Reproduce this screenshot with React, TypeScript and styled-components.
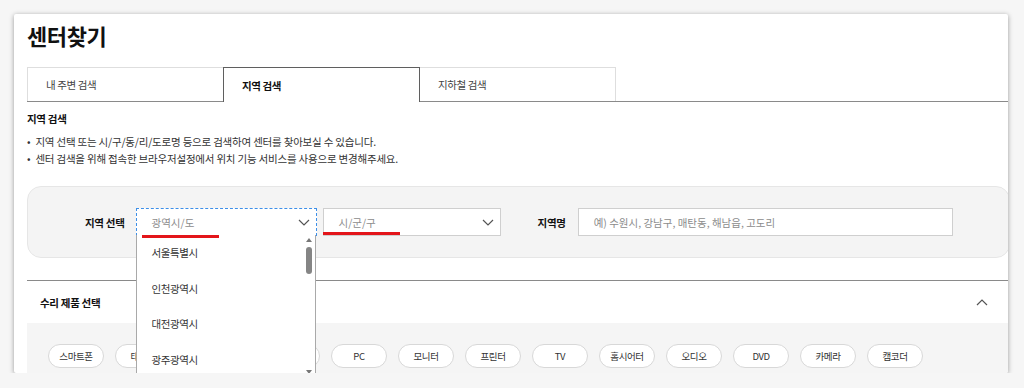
import React from "react";
import styled, { createGlobalStyle } from "styled-components";

const GlobalStyle = createGlobalStyle`
  body {
    margin: 0;
    background: #f6f6f6;
    font-family: "Noto Sans CJK KR", "Noto Sans", sans-serif;
    color: #222;
  }
`;

const Screen = styled.div`
  padding: 14px 0 0 14px;
`;

const Frame = styled.div`
  width: 994px;
  height: 359px;
  background: #fff;
  box-shadow: 0 1px 5px rgba(0, 0, 0, 0.38);
  border-radius: 2px;
  overflow: hidden;
  box-sizing: border-box;
  padding-left: 13px;
`;

const Title = styled.h1`
  margin: 4px 0 15px;
  font-size: 22px;
  line-height: 34px;
  font-weight: 700;
  letter-spacing: -0.4px;
  color: #111;
`;

const TabBar = styled.div`
  display: flex;
  align-items: flex-start;
  height: 35px;
  box-sizing: border-box;
  border-bottom: 1px solid #8a8a8a;
`;

const Tab = styled.div<{ $active?: boolean }>`
  position: relative;
  z-index: ${(p) => (p.$active ? 1 : 0)};
  width: 197px;
  height: ${(p) => (p.$active ? "35px" : "34px")};
  margin-left: -1px;
  box-sizing: border-box;
  display: flex;
  align-items: center;
  padding-left: 18px;
  background: #fff;
  border: 1px solid ${(p) => (p.$active ? "#5f5f5f" : "#dedede")};
  border-bottom: none;
  font-size: 10.5px;
  letter-spacing: -0.4px;
  font-weight: ${(p) => (p.$active ? 700 : 400)};
  color: ${(p) => (p.$active ? "#111" : "#444")};

  &:first-child {
    margin-left: 0;
  }
`;

const SubTitle = styled.div`
  margin-top: 9px;
  font-size: 10.5px;
  line-height: 16px;
  font-weight: 700;
  letter-spacing: -0.3px;
  color: #111;
`;

const Notes = styled.ul`
  margin: 6px 0 0;
  padding: 0;
  list-style: none;
`;

const Note = styled.li`
  font-size: 10.5px;
  line-height: 17px;
  letter-spacing: -0.2px;
  color: #333;

  &::before {
    content: "•";
    margin-right: 5px;
  }
`;

const SearchPanel = styled.div`
  margin-top: 19px;
  width: calc(100% + 2px);
  height: 72px;
  box-sizing: border-box;
  display: flex;
  align-items: center;
  padding-left: 57px;
  background: #f4f4f4;
  border: 1px solid #e6e6e6;
  border-radius: 14px;
`;

const FieldLabel = styled.span<{ $gap: number; $lead?: number }>`
  margin-left: ${(p) => p.$lead ?? 0}px;
  margin-right: ${(p) => p.$gap}px;
  font-size: 10.5px;
  font-weight: 700;
  letter-spacing: -0.3px;
  color: #111;
`;

const SelectBox = styled.div<{ $width: number; $focused?: boolean; $gap?: number }>`
  position: relative;
  width: ${(p) => p.$width}px;
  height: 28px;
  margin-right: ${(p) => p.$gap ?? 0}px;
  box-sizing: border-box;
  display: flex;
  align-items: center;
  justify-content: space-between;
  padding: 0 6px 0 15px;
  background: #fff;
  border: 1px ${(p) => (p.$focused ? "dashed #3d8fe8" : "solid #cfcfcf")};
  font-size: 10.5px;
  letter-spacing: 0;
  color: #8c8c8c;
`;

const TextField = styled.div`
  width: 375px;
  height: 28px;
  box-sizing: border-box;
  display: flex;
  align-items: center;
  padding-left: 15px;
  background: #fff;
  border: 1px solid #cfcfcf;
  font-size: 10.5px;
  letter-spacing: 0;
  color: #8c8c8c;
`;

const RedMark = styled.span<{ $left: number; $width: number; $bottom: number }>`
  position: absolute;
  left: ${(p) => p.$left}px;
  bottom: ${(p) => p.$bottom}px;
  width: ${(p) => p.$width}px;
  height: 3px;
  background: #e3151a;
  z-index: 3;
`;

const Dropdown = styled.div`
  position: absolute;
  top: 100%;
  left: -1px;
  width: 180px;
  height: 140px;
  box-sizing: border-box;
  display: flex;
  background: #fff;
  border: 1px solid #a9a9a9;
  border-top: none;
  z-index: 2;
`;

const Options = styled.div`
  flex: 1;
`;

const Option = styled.div`
  height: 35.5px;
  display: flex;
  align-items: center;
  padding-left: 15px;
  font-size: 10.5px;
  letter-spacing: -0.4px;
  color: #333;
`;

const ScrollTrack = styled.div`
  width: 12px;
  display: flex;
  flex-direction: column;
  align-items: center;
  padding-top: 3px;
`;

const Arrow = styled.span<{ $down?: boolean }>`
  width: 0;
  height: 0;
  border-left: 3px solid transparent;
  border-right: 3px solid transparent;
  ${(p) => (p.$down ? "border-top: 4px solid #777;" : "border-bottom: 4px solid #777;")}
`;

const Thumb = styled.span`
  width: 6px;
  height: 27px;
  margin-top: 5px;
  border-radius: 3px;
  background: #858585;
`;

const TrackFill = styled.span`
  flex: 1;
`;

const SectionHeader = styled.div`
  margin-top: 22px;
  height: 43px;
  box-sizing: border-box;
  display: flex;
  align-items: center;
  justify-content: space-between;
  padding: 0 20px 0 13px;
  border-top: 1px solid #8a8a8a;
  font-size: 10.5px;
  font-weight: 700;
  letter-spacing: -0.3px;
  color: #111;
`;

const ProductArea = styled.div`
  height: 60px;
  display: flex;
  gap: 11px;
  padding: 21px 0 0 21px;
  box-sizing: border-box;
  background: #f5f5f5;
`;

const Pill = styled.div<{ $width: number }>`
  width: ${(p) => p.$width}px;
  height: 24px;
  box-sizing: border-box;
  display: flex;
  align-items: center;
  justify-content: center;
  flex-shrink: 0;
  background: #fff;
  border: 1px solid #d8d8d8;
  border-radius: 12px;
  font-size: 9.5px;
  letter-spacing: -0.4px;
  color: #333;
`;

const Chevron = ({ up }: { up?: boolean }) => (
  <svg width="12" height="7" viewBox="0 0 12 7">
    <polyline
      points={up ? "1,6 6,1 11,6" : "1,1 6,6 11,1"}
      fill="none"
      stroke="#555"
      strokeWidth="1.2"
    />
  </svg>
);

const cities = ["서울특별시", "인천광역시", "대전광역시", "광주광역시"];
const products: [string, number][] = [
  ["스마트폰", 56], ["태블릿", 56], ["웨어러블", 64], ["노트북", 63],
  ["PC", 56], ["모니터", 56], ["프린터", 56], ["TV", 56], ["홈시어터", 56],
  ["오디오", 56], ["DVD", 56], ["카메라", 56], ["캠코더", 56],
];

export default function App() {
  return (
    <>
      <GlobalStyle />
      <Screen>
        <Frame>
          <Title>센터찾기</Title>
          <TabBar>
            <Tab>내 주변 검색</Tab>
            <Tab $active>지역 검색</Tab>
            <Tab>지하철 검색</Tab>
          </TabBar>

          <SubTitle>지역 검색</SubTitle>
          <Notes>
            <Note>지역 선택 또는 시/구/동/리/도로명 등으로 검색하여 센터를 찾아보실 수 있습니다.</Note>
            <Note>센터 검색을 위해 접속한 브라우저설정에서 위치 기능 서비스를 사용으로 변경해주세요.</Note>
          </Notes>

          <SearchPanel>
            <FieldLabel $gap={11}>지역 선택</FieldLabel>
            <SelectBox $width={181} $focused $gap={6}>
              광역시/도
              <Chevron />
              <RedMark $left={5} $width={77} $bottom={-3} />
              <Dropdown>
                <Options>
                  {cities.map((c) => (
                    <Option key={c}>{c}</Option>
                  ))}
                </Options>
                <ScrollTrack>
                  <Arrow />
                  <Thumb />
                  <TrackFill />
                  <Arrow $down />
                </ScrollTrack>
              </Dropdown>
            </SelectBox>
            <SelectBox $width={178}>
              시/군/구
              <Chevron />
              <RedMark $left={-1} $width={77} $bottom={0} />
            </SelectBox>
            <FieldLabel $lead={37} $gap={12}>지역명</FieldLabel>
            <TextField>예) 수원시, 강남구, 매탄동, 해남읍, 고도리</TextField>
          </SearchPanel>

          <SectionHeader>
            수리 제품 선택
            <Chevron up />
          </SectionHeader>
          <ProductArea>
            {products.map(([p, w]) => (
              <Pill key={p} $width={w}>{p}</Pill>
            ))}
          </ProductArea>
        </Frame>
      </Screen>
    </>
  );
}
